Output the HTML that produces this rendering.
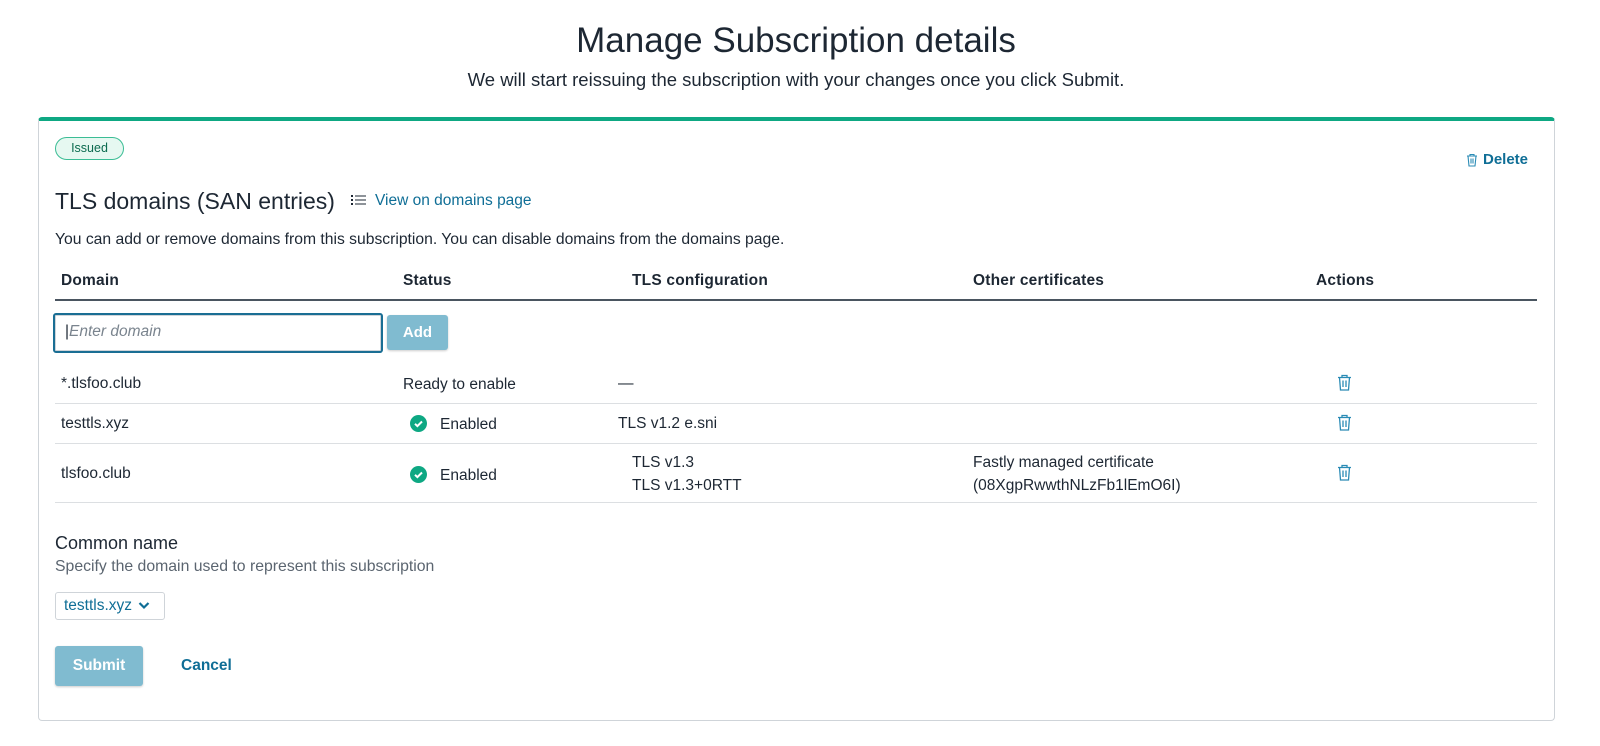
<!DOCTYPE html>
<html><head><meta charset="utf-8"><style>
*{margin:0;padding:0;box-sizing:border-box}
body{width:1600px;height:746px;background:#fff;font-family:"Liberation Sans",sans-serif;color:#1d2733;position:relative;overflow:hidden}
.a{position:absolute;white-space:nowrap}
.t{font-size:15.5px;color:#1d2733}
.h{font-size:15.5px;font-weight:bold;color:#1d2733;letter-spacing:0.2px}
.line{position:absolute;left:55px;width:1482px;height:1px;background:#dcdfe2}
.blue{color:#0f6e96}
</style></head><body>
<div class="a" style="left:0;width:1592px;text-align:center;top:21px;font-size:35px;font-weight:300;color:#1d2733">Manage Subscription details</div>
<div class="a" style="left:0;width:1592px;text-align:center;top:69px;font-size:18.5px;color:#1d2733">We will start reissuing the subscription with your changes once you click Submit.</div>
<div class="a" style="left:38px;top:117px;width:1517px;height:604px;border:1px solid #cfd4d9;border-top:4px solid #0ea883;border-radius:4px"></div>
<div class="a" style="left:55px;top:137px;width:69px;height:23px;border:1px solid #3bbd95;background:#e6f8f1;border-radius:12px;font-size:12.5px;color:#0b6b4f;text-align:center;line-height:21px">Issued</div>
<div class="a blue" style="left:1466px;top:151px;font-size:15px;font-weight:bold">
<svg width="12" height="14" viewBox="0 0 12 14" style="vertical-align:-3px;margin-right:5px"><path d="M1 3h10M4 3V1.5h4V3M2 3l1 10h6l1-10M5 5.5v5M7 5.5v5" fill="none" stroke="#2a8bb5" stroke-width="1.1"/></svg>Delete</div>
<div class="a" style="left:55px;top:188px;font-size:23px;color:#1d2733">TLS domains (SAN entries)</div>
<div class="a blue" style="left:351px;top:192px;font-size:15.5px">
<svg width="16" height="12" viewBox="0 0 16 12" style="vertical-align:-1px;margin-right:8px"><g fill="#1d2733"><rect x="0" y="1" width="2" height="2"/><rect x="0" y="5" width="2" height="2"/><rect x="0" y="9" width="2" height="2"/><rect x="4" y="1.5" width="11" height="1"/><rect x="4" y="5.5" width="11" height="1"/><rect x="4" y="9.5" width="11" height="1"/></g></svg>View on domains page</div>
<div class="a t" style="left:55px;top:231px;font-size:15.7px">You can add or remove domains from this subscription. You can disable domains from the domains page.</div>
<div class="a h" style="left:61px;top:272px">Domain</div>
<div class="a h" style="left:403px;top:272px">Status</div>
<div class="a h" style="left:632px;top:272px">TLS configuration</div>
<div class="a h" style="left:973px;top:272px">Other certificates</div>
<div class="a h" style="left:1316px;top:272px">Actions</div>
<div class="a" style="left:55px;top:299px;width:1482px;height:2px;background:#4a5560"></div>
<div class="a" style="left:53px;top:313px;width:330px;height:40px;border:2px solid #1a6e94;border-radius:3px;box-shadow:inset 0 0 0 1px #cfd4d9"></div>
<div class="a" style="left:65px;top:323px;font-size:15.5px;font-style:italic;color:#7a848e"><span style="color:#1d2733;font-style:normal">|</span>Enter domain</div>
<div class="a" style="left:387px;top:315px;width:61px;height:35px;background:#80bbd0;border-radius:3px;color:#fff;font-weight:bold;font-size:15px;text-align:center;line-height:35px;box-shadow:0 1px 2px rgba(0,0,0,.2)">Add</div>
<div class="a t" style="left:61px;top:375px">*.tlsfoo.club</div>
<div class="a t" style="left:403px;top:376px">Ready to enable</div>
<div class="a t" style="left:618px;top:375px">—</div>
<div class="line" style="top:403px"></div>
<div class="a t" style="left:61px;top:415px">testtls.xyz</div>
<div class="a t" style="left:618px;top:415px">TLS v1.2 e.sni</div>
<div class="line" style="top:443px"></div>
<div class="a t" style="left:61px;top:465px">tlsfoo.club</div>
<div class="a t" style="left:632px;top:454px">TLS v1.3</div>
<div class="a t" style="left:632px;top:477px">TLS v1.3+0RTT</div>
<div class="a t" style="left:973px;top:454px">Fastly managed certificate</div>
<div class="a t" style="left:973px;top:477px">(08XgpRwwthNLzFb1lEmO6I)</div>
<div class="line" style="top:502px"></div>
<div class="a t" style="left:410px;top:415px"><svg width="17" height="17" viewBox="0 0 17 17" style="vertical-align:-3px;margin-right:13px"><circle cx="8.5" cy="8.5" r="8.5" fill="#0ea883"/><path d="M5 8.8l2.4 2.3 4.6-4.6" fill="none" stroke="#fff" stroke-width="2"/></svg>Enabled</div>
<div class="a t" style="left:410px;top:466px"><svg width="17" height="17" viewBox="0 0 17 17" style="vertical-align:-3px;margin-right:13px"><circle cx="8.5" cy="8.5" r="8.5" fill="#0ea883"/><path d="M5 8.8l2.4 2.3 4.6-4.6" fill="none" stroke="#fff" stroke-width="2"/></svg>Enabled</div>
<svg class="a" style="left:1337px;top:374px" width="15" height="17" viewBox="0 0 15 17"><path d="M1 3.5h13M5 3.5V1.5h5v2M2.5 3.5l1 12.5h8l1-12.5M6 6.5v6.5M9 6.5v6.5" fill="none" stroke="#2a8bb5" stroke-width="1.3"/></svg>
<svg class="a" style="left:1337px;top:414px" width="15" height="17" viewBox="0 0 15 17"><path d="M1 3.5h13M5 3.5V1.5h5v2M2.5 3.5l1 12.5h8l1-12.5M6 6.5v6.5M9 6.5v6.5" fill="none" stroke="#2a8bb5" stroke-width="1.3"/></svg>
<svg class="a" style="left:1337px;top:464px" width="15" height="17" viewBox="0 0 15 17"><path d="M1 3.5h13M5 3.5V1.5h5v2M2.5 3.5l1 12.5h8l1-12.5M6 6.5v6.5M9 6.5v6.5" fill="none" stroke="#2a8bb5" stroke-width="1.3"/></svg>
<div class="a" style="left:55px;top:533px;font-size:18px;font-weight:500;color:#1d2733">Common name</div>
<div class="a" style="left:55px;top:558px;font-size:15.8px;color:#5b6570">Specify the domain used to represent this subscription</div>
<div class="a blue" style="left:55px;top:592px;width:110px;height:28px;border:1px solid #cfd4d9;border-radius:3px;font-size:15.5px;line-height:26px;padding-left:8px">testtls.xyz<svg width="12" height="9" viewBox="0 0 12 9" style="margin-left:6px"><path d="M1.5 2l4.5 4.5 4.5-4.5" fill="none" stroke="#0f6e96" stroke-width="2.2"/></svg></div>
<div class="a" style="left:55px;top:646px;width:88px;height:40px;background:#80bbd0;border-radius:3px;color:#fff;font-weight:bold;font-size:15.5px;text-align:center;line-height:40px;box-shadow:0 1px 2px rgba(0,0,0,.2)">Submit</div>
<div class="a blue" style="left:181px;top:657px;font-size:15.5px;font-weight:bold">Cancel</div>
</body></html>
